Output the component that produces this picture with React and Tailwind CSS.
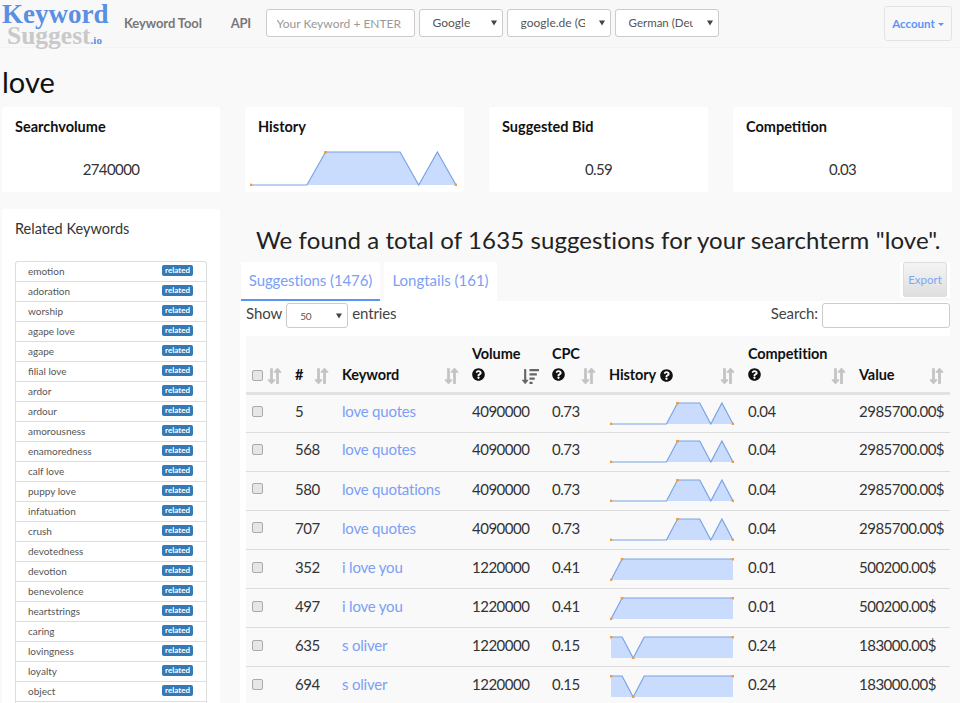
import { FaQuestionCircle, FaLongArrowAltDown, FaLongArrowAltUp, FaSortAmountDown } from 'react-icons/fa';

const font = { fontFamily: 'Lato, "Noto Sans", sans-serif' };

const relatedKeywords = ['emotion', 'adoration', 'worship', 'agape love', 'agape', 'filial love', 'ardor', 'ardour', 'amorousness', 'enamoredness', 'calf love', 'puppy love', 'infatuation', 'crush', 'devotedness', 'devotion', 'benevolence', 'heartstrings', 'caring', 'lovingness', 'loyalty', 'object'];

const quotes = [0, 0, 0, 0, 0, 0, 1, 1, 1, 0, 1, 0];
const iLoveYou = [0, 1, 1, 1, 1, 1, 1, 1, 1, 1, 1, 1];
const oliver = [1, 1, 0, 1, 1, 1, 1, 1, 1, 1, 1, 1];

const rows = [
  { id: 5, keyword: 'love quotes', volume: 4090000, cpc: '0.73', history: quotes, competition: '0.04', value: '2985700.00$' },
  { id: 568, keyword: 'love quotes', volume: 4090000, cpc: '0.73', history: quotes, competition: '0.04', value: '2985700.00$' },
  { id: 580, keyword: 'love quotations', volume: 4090000, cpc: '0.73', history: quotes, competition: '0.04', value: '2985700.00$' },
  { id: 707, keyword: 'love quotes', volume: 4090000, cpc: '0.73', history: quotes, competition: '0.04', value: '2985700.00$' },
  { id: 352, keyword: 'i love you', volume: 1220000, cpc: '0.41', history: iLoveYou, competition: '0.01', value: '500200.00$' },
  { id: 497, keyword: 'i love you', volume: 1220000, cpc: '0.41', history: iLoveYou, competition: '0.01', value: '500200.00$' },
  { id: 635, keyword: 's oliver', volume: 1220000, cpc: '0.15', history: oliver, competition: '0.24', value: '183000.00$' },
  { id: 694, keyword: 's oliver', volume: 1220000, cpc: '0.15', history: oliver, competition: '0.24', value: '183000.00$' },
];

function Sparkline({ data, width, height }) {
  const pad = 1;
  const step = (width - pad * 2) / (data.length - 1);
  const top = pad;
  const bottom = height - pad;
  const pts = data.map((v, i) => [pad + i * step, v ? top : bottom]);
  const line = pts.map((p) => p.join(',')).join(' ');
  const area = `${pad},${bottom} ${line} ${width - pad},${bottom}`;
  const extreme = data[0] === 0 ? data.indexOf(1) : data.indexOf(0);
  const dots = [pts[0], pts[extreme], pts[pts.length - 1]];
  return (
    <svg width={width} height={height} className="block">
      <polygon points={area} fill="#c9dcfd" />
      <polyline points={line} fill="none" stroke="#7ba3e6" strokeWidth="1.2" />
      {dots.map((p, i) => <circle key={i} cx={p[0]} cy={p[1]} r="1.5" fill="#f89a35" />)}
    </svg>
  );
}

function SortArrows({ active }) {
  if (active) return <FaSortAmountDown className="text-[17px] text-[#666]" />;
  return (
    <span className="flex text-[#c4c4c4]">
      <FaLongArrowAltDown className="h-[18px] w-[9px]" />
      <FaLongArrowAltUp className="-ml-[3px] h-[18px] w-[9px]" />
    </span>
  );
}

function Select({ value, label, className, textClass }) {
  return (
    <div className={`relative ${className}`}>
      <select defaultValue={value} className={`block h-full w-full appearance-none rounded-[3px] border border-[#ccc] bg-white text-[#555] ${textClass}`}>
        <option value={value}>{label}</option>
      </select>
      <span className="pointer-events-none absolute right-[6px] top-1/2 -translate-y-1/2 border-x-[3px] border-t-[5px] border-x-transparent border-t-[#444]" />
    </div>
  );
}

function Checkbox({ className }) {
  return <input type="checkbox" className={`size-[11px] appearance-none rounded-[2px] border border-[#aaa] bg-[#e6e6e6] ${className}`} />;
}

function StatCard({ title, className, children }) {
  return (
    <div className={`h-[85px] rounded-[3px] bg-white ${className}`}>
      <div className="pl-[13px] pt-[10px] text-[14.5px] font-bold leading-[20px] text-[#111]">{title}</div>
      {children}
    </div>
  );
}

function HeaderCell({ label, help, active }) {
  return (
    <th className="border-b-[3px] border-[#e2e2e2] pb-[7px] pl-[7px] pr-[6px] text-left align-bottom">
      <div className="flex items-end justify-between">
        <div className="text-[14.5px] font-bold leading-[21px] tracking-[-0.1px] text-[#111]">
          {label}
          {help === 'inline' ? <FaQuestionCircle className="ml-[4px] inline text-[13px]" /> : null}
          {help === 'below' ? <div className="flex h-[21px] items-center"><FaQuestionCircle className="text-[13px]" /></div> : null}
        </div>
        <SortArrows active={active} />
      </div>
    </th>
  );
}

export default function App() {
  return (
    <div className="h-[703px] overflow-hidden bg-[#f9f9f9] text-[#333]" style={font}>
      <nav className="flex h-[48px] items-start border-b border-[#f3f3f3] bg-[#f8f8f8]">
        <div className="ml-[2px] mt-[1px] w-[106px] font-['Liberation_Serif',serif] font-bold leading-none">
          <div className="h-[21px] text-[27px] leading-[27px] text-[#5a8fe3]">Keyword</div>
          <div className="ml-[5px] mt-[1px] whitespace-nowrap text-[25.5px] leading-[26px] text-[#c9c9c9]">
            Suggest<span className="text-[11px] text-[#5a8fe3]">.io</span>
          </div>
        </div>
        <a className="ml-[16px] mt-[14px] text-[13px] font-bold leading-[18px] tracking-[-0.1px] text-[#777]">Keyword Tool</a>
        <a className="ml-[29px] mt-[14px] text-[13px] font-bold leading-[18px] tracking-[-0.4px] text-[#777]">API</a>
        <input
          placeholder="Your Keyword + ENTER"
          className="ml-[15px] mt-[9px] h-[28px] w-[149px] rounded-[3px] border border-[#ccc] bg-white px-[10px] text-[12px] placeholder:text-[#999]"
        />
        <Select value="Google" label="Google" className="ml-[4px] mt-[9px] h-[28px] w-[84px]" textClass="pl-[13px] pr-[20px] text-[12px]" />
        <Select value="de" label="google.de (Germany)" className="ml-[4px] mt-[9px] h-[28px] w-[104px]" textClass="pl-[13px] pr-[25px] text-[12px]" />
        <Select value="de" label="German (Deutsch)" className="ml-[4px] mt-[9px] h-[28px] w-[104px]" textClass="pl-[13px] pr-[25px] text-[11.5px]" />
        <button className="ml-auto mr-[8px] mt-[6px] flex h-[35px] w-[68px] items-center justify-center gap-[3px] rounded-[3px] border border-[#e3e3e3] text-[11.5px] font-bold text-[#5c94f5]">
          Account
          <span className="mt-[2px] border-x-[3px] border-t-[3px] border-x-transparent border-t-[#5c94f5]" />
        </button>
      </nav>

      <h1 className="pl-[2px] pt-[14px] text-[29px] font-normal leading-[40px] text-[#111]">love</h1>

      <div className="ml-[2px] mt-[5px] flex gap-[25px]">
        <StatCard title="Searchvolume" className="w-[218px]">
          <div className="mt-[22px] text-center text-[15px] leading-[20px] tracking-[-0.6px]">2740000</div>
        </StatCard>
        <StatCard title="History" className="w-[219px]">
          <div className="ml-[5px] mt-[14px]"><Sparkline data={[0, 0, 0, 0, 1, 1, 1, 1, 1, 0, 1, 0]} width={207} height={35} /></div>
        </StatCard>
        <StatCard title="Suggested Bid" className="w-[219px]">
          <div className="mt-[22px] text-center text-[15px] leading-[20px] tracking-[-0.6px]">0.59</div>
        </StatCard>
        <StatCard title="Competition" className="w-[219px]">
          <div className="mt-[22px] text-center text-[15px] leading-[20px] tracking-[-0.6px]">0.03</div>
        </StatCard>
      </div>

      <div className="mt-[17px] flex">
        <aside className="ml-[2px] h-[600px] w-[218px] shrink-0 rounded-[3px] bg-white px-[13px] pt-[10px]">
          <h3 className="text-[14.5px] font-normal leading-[20px] text-[#333]">Related Keywords</h3>
          <ul className="mt-[22px] h-[480px] rounded-t-[3px] border-x border-t border-[#ddd]">
            {relatedKeywords.map((word) => (
              <li key={word} className="flex h-[20px] items-center justify-between border-b border-[#ddd] pl-[12px] pr-[13px] text-[10px] text-[#555]">
                {word}
                <span className="mb-[2px] rounded-[2px] bg-[#337ab7] px-[3px] text-[8px] font-bold leading-[11px] text-white">related</span>
              </li>
            ))}
          </ul>
        </aside>

        <main className="ml-[20px] min-w-0 flex-1">
          <h2 className="pl-[16px] pt-[14px] text-[24px] font-normal leading-[34px] tracking-[0.1px] text-[#222]">We found a total of 1635 suggestions for your searchterm "love".</h2>

          <div className="ml-[1px] mt-[5px] flex h-[39px] w-[709px] items-start">
            <a className="flex h-[39px] w-[139px] items-center justify-center border-b-2 border-[#5c94f5] bg-white text-[15px] tracking-[-0.1px] text-[#7ba0f5]">Suggestions (1476)</a>
            <a className="ml-[4px] flex h-[39px] w-[113px] items-center justify-center border-b-2 border-white bg-white text-[15px] text-[#7ba0f5]">Longtails (161)</a>
            <div className="ml-auto bg-white px-[3px] pb-[1px]">
              <button className="block h-[35px] w-[44px] rounded-[2px] border border-[#ddd] bg-gradient-to-b from-[#f4f4f4] to-[#dfdfdf] text-[11.5px] text-[#7ea6f5]">Export</button>
            </div>
          </div>

          <div className="w-[710px] bg-white pl-[6px]">
            <div className="flex h-[35px] items-start pt-[2px] text-[15px] leading-[20px] tracking-[-0.1px] text-[#444]">
              Show
              <Select value="50" label="50" className="mx-[4px] h-[25px] w-[62px]" textClass="pl-[13px] pr-[20px] text-[10px]" />
              entries
              <label className="ml-auto flex items-start gap-[4px]">
                Search:
                <input className="h-[25px] w-[128px] rounded-[3px] border border-[#ccc] bg-white" />
              </label>
            </div>

            <table className="w-[704px] table-fixed border-collapse bg-[#f9f9f9] text-[15px]">
              <colgroup>
                <col className="w-[42px]" />
                <col className="w-[47px]" />
                <col className="w-[130px]" />
                <col className="w-[80px]" />
                <col className="w-[57px]" />
                <col className="w-[139px]" />
                <col className="w-[111px]" />
                <col className="w-[98px]" />
              </colgroup>
              <thead>
                <tr className="h-[57px]">
                  <th className="border-b-[3px] border-[#e2e2e2] pb-[7px] pl-[6px] align-bottom">
                    <div className="flex items-center gap-[4px]">
                      <Checkbox className="block" />
                      <SortArrows />
                    </div>
                  </th>
                  <HeaderCell label="#" />
                  <HeaderCell label="Keyword" />
                  <HeaderCell label="Volume" help="below" active />
                  <HeaderCell label="CPC" help="below" />
                  <HeaderCell label="History" help="inline" />
                  <HeaderCell label="Competition" help="below" />
                  <HeaderCell label="Value" />
                </tr>
              </thead>
              <tbody>
                {rows.map((row) => (
                  <tr key={row.id} className="h-[39.15px] border-b border-[#ddd]">
                    <td className="pb-[4px] pl-[6px]"><Checkbox className="block" /></td>
                    <td className="pb-[4px] pl-[7px] tracking-[-0.5px]">{row.id}</td>
                    <td className="pb-[4px] pl-[7px] tracking-[-0.2px] text-[#7ba0f5]">{row.keyword}</td>
                    <td className="pb-[4px] pl-[7px] tracking-[-0.5px]">{row.volume}</td>
                    <td className="pb-[4px] pl-[7px] tracking-[-0.5px]">{row.cpc}</td>
                    <td className="pl-[8px]"><Sparkline data={row.history} width={124} height={23} /></td>
                    <td className="pb-[4px] pl-[7px] tracking-[-0.5px]">{row.competition}</td>
                    <td className="whitespace-nowrap pb-[4px] pl-[7px] tracking-[-0.5px]">{row.value}</td>
                  </tr>
                ))}
              </tbody>
            </table>
          </div>
        </main>
      </div>
    </div>
  );
}
